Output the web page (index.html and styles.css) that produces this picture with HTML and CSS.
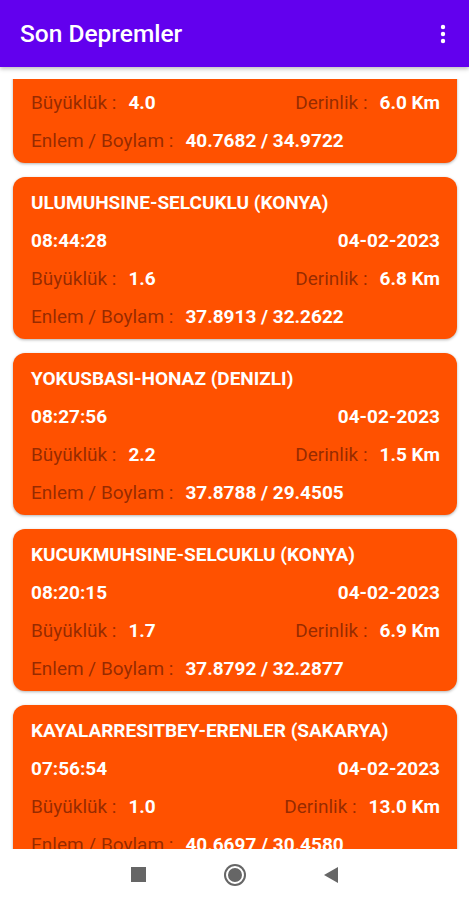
FILE: index.html
```html
<!DOCTYPE html>
<html lang="tr">
<head>
    <meta charset="UTF-8">
    <meta name="viewport" content="width=device-width, initial-scale=1.0">
    <title>Son Depremler</title>
    <link rel="stylesheet" href="styles.css">
</head>
<body>
    <div class="app">
        <header class="appbar">
            <h1>Son Depremler</h1>
            <svg class="menu" width="6" height="20" viewBox="0 0 6 20">
                <circle cx="3" cy="3" r="2.2" fill="#fff"/>
                <circle cx="3" cy="10" r="2.2" fill="#fff"/>
                <circle cx="3" cy="17" r="2.2" fill="#fff"/>
            </svg>
        </header>

        <main class="list">
            <div class="scroll">
                <div class="card">
                    <div class="row title">MERKEZ (KIRSEHIR)</div>
                    <div class="row"><b>08:52:10</b><b>04-02-2023</b></div>
                    <div class="row">
                        <span><span class="label">Büyüklük :</span><b class="value">4.0</b></span>
                        <span><span class="label">Derinlik :</span><b class="value">6.0 Km</b></span>
                    </div>
                    <div class="row">
                        <span><span class="label">Enlem / Boylam :</span><b class="value">40.7682 / 34.9722</b></span>
                    </div>
                </div>

                <div class="card">
                    <div class="row title">ULUMUHSINE-SELCUKLU (KONYA)</div>
                    <div class="row"><b>08:44:28</b><b>04-02-2023</b></div>
                    <div class="row">
                        <span><span class="label">Büyüklük :</span><b class="value">1.6</b></span>
                        <span><span class="label">Derinlik :</span><b class="value">6.8 Km</b></span>
                    </div>
                    <div class="row">
                        <span><span class="label">Enlem / Boylam :</span><b class="value">37.8913 / 32.2622</b></span>
                    </div>
                </div>

                <div class="card">
                    <div class="row title">YOKUSBASI-HONAZ (DENIZLI)</div>
                    <div class="row"><b>08:27:56</b><b>04-02-2023</b></div>
                    <div class="row">
                        <span><span class="label">Büyüklük :</span><b class="value">2.2</b></span>
                        <span><span class="label">Derinlik :</span><b class="value">1.5 Km</b></span>
                    </div>
                    <div class="row">
                        <span><span class="label">Enlem / Boylam :</span><b class="value">37.8788 / 29.4505</b></span>
                    </div>
                </div>

                <div class="card">
                    <div class="row title">KUCUKMUHSINE-SELCUKLU (KONYA)</div>
                    <div class="row"><b>08:20:15</b><b>04-02-2023</b></div>
                    <div class="row">
                        <span><span class="label">Büyüklük :</span><b class="value">1.7</b></span>
                        <span><span class="label">Derinlik :</span><b class="value">6.9 Km</b></span>
                    </div>
                    <div class="row">
                        <span><span class="label">Enlem / Boylam :</span><b class="value">37.8792 / 32.2877</b></span>
                    </div>
                </div>

                <div class="card">
                    <div class="row title">KAYALARRESITBEY-ERENLER (SAKARYA)</div>
                    <div class="row"><b>07:56:54</b><b>04-02-2023</b></div>
                    <div class="row">
                        <span><span class="label">Büyüklük :</span><b class="value">1.0</b></span>
                        <span><span class="label">Derinlik :</span><b class="value">13.0 Km</b></span>
                    </div>
                    <div class="row">
                        <span><span class="label">Enlem / Boylam :</span><b class="value">40.6697 / 30.4580</b></span>
                    </div>
                </div>
            </div>
        </main>

        <nav class="navbar">
            <span class="nav-square"></span>
            <span class="nav-home"></span>
            <svg class="nav-back" width="14" height="16" viewBox="0 0 14 16">
                <polygon points="14,0 14,16 0,8" fill="#666"/>
            </svg>
        </nav>
    </div>
</body>
</html>
```

FILE: styles.css
```css
body {
    margin: 0;
    font-family: Roboto, "Liberation Sans", sans-serif;
    background: #fff;
}
.app {
    height: 900px;
    display: flex;
    flex-direction: column;
    overflow: hidden;
}
.appbar {
    height: 67px;
    flex: none;
    background-color: #6200ee;
    display: flex;
    align-items: center;
    justify-content: space-between;
    padding: 0 23px 0 20px;
    box-shadow: 0 2px 4px rgba(0, 0, 0, 0.25);
    position: relative;
    z-index: 1;
}
.appbar h1 {
    margin: 0;
    color: #fff;
    font-size: 24.5px;
    font-weight: 500;
}
.list {
    flex: 1;
    margin-top: 12px;
    overflow: hidden;
}
.scroll {
    margin-top: -78px;
}
.card {
    margin: 0 12px 14px 13px;
    height: 162px;
    box-sizing: border-box;
    padding: 15px 17px 0 18px;
    background-color: #ff5100;
    border-radius: 12px;
    box-shadow: 0 1px 3px rgba(0, 0, 0, 0.3);
    display: flex;
    flex-direction: column;
    gap: 16px;
}
.row {
    height: 22px;
    line-height: 22px;
    font-size: 19px;
    display: flex;
    justify-content: space-between;
    color: #fff;
    white-space: nowrap;
}
.row b, .title {
    font-weight: 700;
}
.label {
    color: rgba(60, 10, 0, 0.55);
}
.value {
    margin-left: 12px;
}
.navbar {
    height: 51px;
    flex: none;
    background: #fff;
    display: flex;
    align-items: center;
    justify-content: center;
    gap: 80px;
}
.nav-square {
    width: 15px;
    height: 15px;
    background: #666;
}
.nav-home {
    width: 14px;
    height: 14px;
    border-radius: 50%;
    background: #666;
    border: 2px solid #fff;
    box-shadow: 0 0 0 2px #666;
}
```
